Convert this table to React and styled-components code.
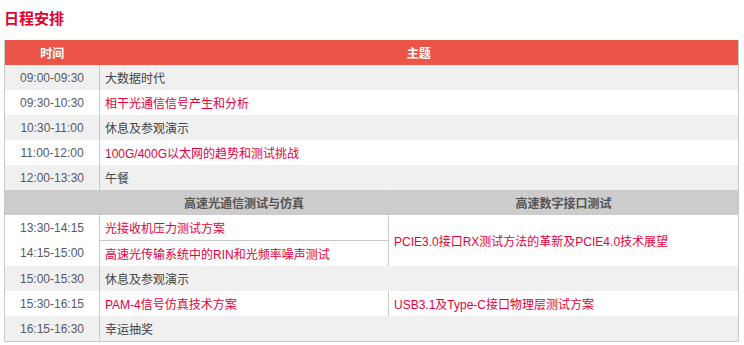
import React from 'react';
import styled, { createGlobalStyle } from 'styled-components';

const GlobalStyle = createGlobalStyle`
  body {
    margin: 0;
    background: #fff;
    font-family: "Liberation Sans", Arial, "Noto Sans CJK SC", sans-serif;
  }
`;

const Page = styled.div`
  padding: 8px 5px 0 4px;
`;

const Title = styled.h2`
  margin: 0 0 12px;
  font-size: 15px;
  line-height: 20px;
  font-weight: bold;
  color: #e2002d;
  font-family: "Noto Sans CJK SC", sans-serif;
`;

const Table = styled.table`
  width: 735px;
  border-collapse: collapse;
  table-layout: fixed;
  border-left: 1px solid #c8c8c8;
  border-right: 1px solid #c8c8c8;
  border-bottom: 1px solid #c8c8c8;
  font-size: 12px;
`;

const HeadCell = styled.th`
  height: 25px;
  padding: 0;
  background: #eb5547;
  color: #fff;
  font-weight: bold;
  font-size: 12px;
  font-family: "Noto Sans CJK SC", sans-serif;
  text-align: center;
`;

const Row = styled.tr`
  background: ${p => (p.$alt ? '#f0f0f0' : '#fff')};
`;

const SubRow = styled.tr`
  background: #cccccc;
`;

const TimeCell = styled.td`
  height: 25px;
  padding: 0;
  text-align: center;
  color: #555a66;
  border-right: 1px solid #c8c8c8;
  font-family: "Liberation Sans", Arial, sans-serif;
`;

const SubHead = styled.td`
  height: 25px;
  padding: 0;
  text-align: center;
  color: #555;
  font-weight: bold;
  font-family: "Noto Sans CJK SC", sans-serif;
  border-right: 1px solid #c8c8c8;
  &:last-child {
    border-right: none;
  }
`;

const Topic = styled.td`
  height: 25px;
  padding: 0 0 0 5px;
  text-align: left;
  color: ${p => (p.$hot ? '#e5003a' : '#444')};
  font-family: "Liberation Sans", Arial, "Noto Sans CJK SC", sans-serif;
  border-right: ${p => (p.$split ? '1px solid #c8c8c8' : 'none')};
  border-bottom: ${p => (p.$under ? '1px solid #c8c8c8' : 'none')};
  white-space: nowrap;
`;

const morning = [
  ['09:00-09:30', '大数据时代', false],
  ['09:30-10:30', '相干光通信信号产生和分析', true],
  ['10:30-11:00', '休息及参观演示', false],
  ['11:00-12:00', '100G/400G以太网的趋势和测试挑战', true],
  ['12:00-13:30', '午餐', false],
];

function App() {
  return (
    <Page>
      <GlobalStyle />
      <Title>日程安排</Title>
      <Table>
        <colgroup>
          <col style={{ width: 95 }} />
          <col style={{ width: 289 }} />
          <col />
        </colgroup>
        <thead>
          <tr>
            <HeadCell>时间</HeadCell>
            <HeadCell colSpan={2}>主题</HeadCell>
          </tr>
        </thead>
        <tbody>
          {morning.map(([time, topic, hot], i) => (
            <Row key={time} $alt={i % 2 === 0}>
              <TimeCell>{time}</TimeCell>
              <Topic colSpan={2} $hot={hot}>{topic}</Topic>
            </Row>
          ))}
          <SubRow>
            <SubHead />
            <SubHead>高速光通信测试与仿真</SubHead>
            <SubHead>高速数字接口测试</SubHead>
          </SubRow>
          <Row>
            <TimeCell>13:30-14:15</TimeCell>
            <Topic $hot $split $under>光接收机压力测试方案</Topic>
            <Topic $hot rowSpan={2}>PCIE3.0接口RX测试方法的革新及PCIE4.0技术展望</Topic>
          </Row>
          <Row>
            <TimeCell>14:15-15:00</TimeCell>
            <Topic $hot $split>高速光传输系统中的RIN和光频率噪声测试</Topic>
          </Row>
          <Row $alt>
            <TimeCell>15:00-15:30</TimeCell>
            <Topic colSpan={2}>休息及参观演示</Topic>
          </Row>
          <Row>
            <TimeCell>15:30-16:15</TimeCell>
            <Topic $hot $split>PAM-4信号仿真技术方案</Topic>
            <Topic $hot>USB3.1及Type-C接口物理层测试方案</Topic>
          </Row>
          <Row $alt>
            <TimeCell>16:15-16:30</TimeCell>
            <Topic colSpan={2}>幸运抽奖</Topic>
          </Row>
        </tbody>
      </Table>
    </Page>
  );
}

export default App;
